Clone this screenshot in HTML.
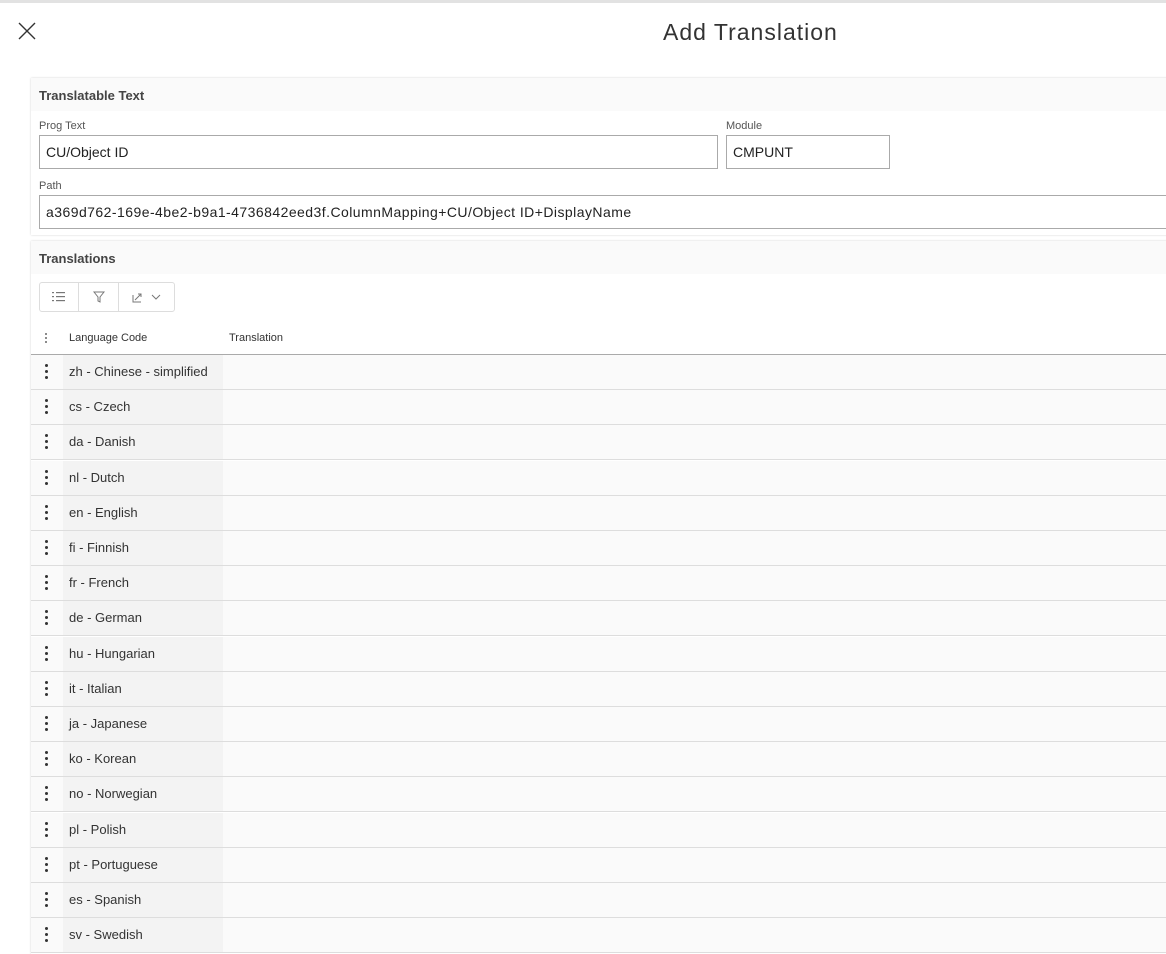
<!DOCTYPE html>
<html><head><meta charset="utf-8"><style>
*{box-sizing:border-box;margin:0;padding:0}
body{width:1166px;height:954px;overflow:hidden;background:#fff;font-family:"Liberation Sans",sans-serif;color:#333;position:relative}
.top{position:absolute;left:0;top:0;width:1166px;height:3px;background:#e2e2e2}
.title{position:absolute;left:663px;top:19px;font-size:23px;letter-spacing:1px;color:#333}
.panel{position:absolute;left:31px;width:1160px;background:#fff;box-shadow:0 0 2px rgba(0,0,0,.18)}
.ph{height:33px;background:#fafafa;font-size:13px;font-weight:600;color:#444;padding:10px 0 0 8px}
.lbl{position:absolute;font-size:11px;color:#555}
.inp{position:absolute;height:34px;border:1px solid #aaa;font-size:14px;padding:8px 0 0 6px;color:#222;white-space:nowrap}
.tb{position:absolute;left:39px;top:282px;width:136px;height:30px;border:1px solid #ddd;border-radius:3px;display:flex}
.tb div{border-right:1px solid #ddd;display:flex;align-items:center;justify-content:center}
.row{position:absolute;left:31px;width:1140px;height:35px;background:#fafafa;border-bottom:1px solid #ddd}
.row .lc{position:absolute;left:32px;top:0;width:160px;height:34px;background:#f3f3f3;font-size:13px;padding:9px 0 0 6px;color:#333}
.dots{position:absolute;left:14px;top:9px;width:3px}
.dots i{display:block;width:3px;height:3px;background:#333;border-radius:50%;margin-bottom:3px}
</style></head><body>
<div class="top"></div>
<svg style="position:absolute;left:18px;top:22px" width="18" height="18"><path d="M1 1L17 17M17 1L1 17" stroke="#333" stroke-width="1.4"/></svg>
<div class="title">Add Translation</div>
<div class="panel" style="top:78px;height:157px">
<div class="ph">Translatable Text</div>
</div>
<div class="lbl" style="left:39px;top:120px">Prog Text</div>
<div class="inp" style="left:39px;top:135px;width:679px">CU/Object ID</div>
<div class="lbl" style="left:726px;top:120px">Module</div>
<div class="inp" style="left:726px;top:135px;width:164px">CMPUNT</div>
<div class="lbl" style="left:39px;top:180px">Path</div>
<div class="inp" style="left:39px;top:195px;width:1140px;letter-spacing:0.45px">a369d762-169e-4be2-b9a1-4736842eed3f.ColumnMapping+CU/Object ID+DisplayName</div>
<div class="panel" style="top:241px;height:713px">
<div class="ph">Translations</div>
</div>
<div class="tb">
<div style="width:39px"><svg width="14" height="10"><g fill="#777"><rect x="0" y="0" width="2" height="1.2"/><rect x="0" y="4" width="2" height="1.2"/><rect x="0" y="8" width="2" height="1.2"/><rect x="4" y="0" width="9" height="1.2"/><rect x="4" y="4" width="9" height="1.2"/><rect x="4" y="8" width="9" height="1.2"/></g></svg></div>
<div style="width:40px"><svg width="12" height="12"><path d="M1 1H11L7 6V11L5 10V6Z" fill="none" stroke="#777" stroke-width="1"/></svg></div>
<div style="width:55px;border-right:none;gap:8px"><svg width="11" height="11"><path d="M1 3V10H9M3 8L9 2M6 2H9V5" fill="none" stroke="#777" stroke-width="1"/></svg><svg width="10" height="6"><path d="M1 1L5 5L9 1" fill="none" stroke="#777"/></svg></div>
</div>
<div style="position:absolute;left:31px;top:320px;width:1140px;height:35px;border-bottom:1px solid #aaa">
<div class="dots" style="left:14px;top:13px"><i style="width:2px;height:2px;margin-bottom:2px;background:#666"></i><i style="width:2px;height:2px;margin-bottom:2px;background:#666"></i><i style="width:2px;height:2px;background:#666"></i></div>
<div style="position:absolute;left:38px;top:12px;font-size:11px;color:#333">Language Code</div>
<div style="position:absolute;left:198px;top:12px;font-size:11px;color:#333">Translation</div>
</div>
<div id="rows"></div>
<script>
var l=["zh - Chinese - simplified","cs - Czech","da - Danish","nl - Dutch","en - English","fi - Finnish","fr - French","de - German","hu - Hungarian","it - Italian","ja - Japanese","ko - Korean","no - Norwegian","pl - Polish","pt - Portuguese","es - Spanish","sv - Swedish"];
var h="";l.forEach(function(t,i){h+='<div class="row" style="top:'+(355+i*35.2).toFixed(1)+'px"><div class="dots"><i></i><i></i><i></i></div><div class="lc">'+t+'</div></div>';});
document.getElementById("rows").innerHTML=h;
</script>
</body></html>
